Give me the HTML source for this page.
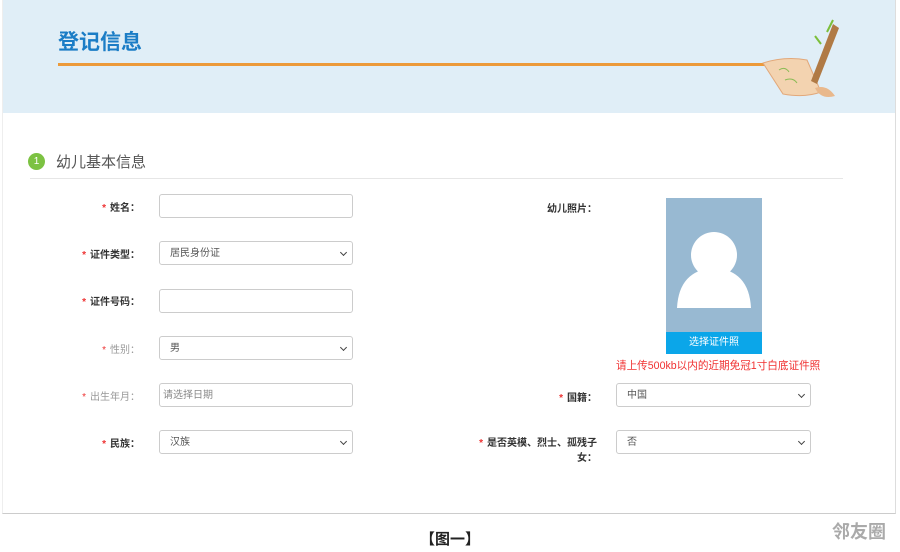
<!DOCTYPE html>
<html><head><meta charset="utf-8"><style>
body{margin:0;width:900px;height:552px;background:#fff;font-family:"Liberation Sans","Noto Sans CJK SC",sans-serif;position:relative;overflow:hidden}
.a{position:absolute}
.hdr{left:2px;top:0;width:893px;height:113px;background:#e0eef7}
.frame{left:2px;top:0;width:892px;height:513px;border-right:1px solid #ddd;border-left:1px solid #eee;border-bottom:1px solid #ccc}
.lab{font-size:10px;color:#333;font-weight:bold;text-align:right;width:200px}
.lab.g{color:#999;font-weight:normal}
.lab i{color:#e33;font-style:normal;margin-right:4px}
.in{border:1px solid #ccc;border-radius:3px;height:24px;width:194px;background:#fff;box-sizing:border-box;font-size:10px;color:#555;line-height:24px;padding-left:10px}
.in.s::after{content:"";position:absolute;right:6px;top:8px;width:4px;height:4px;border-right:1.5px solid #444;border-bottom:1.5px solid #444;transform:rotate(45deg)}
</style></head><body>
<div class="a hdr"></div>
<div class="a frame"></div>
<div class="a" style="left:58px;top:26px;font-size:21px;font-weight:bold;color:#1b7dc6">登记信息</div>
<div class="a" style="left:58px;top:63px;width:712px;height:3px;background:#ec9a3a"></div>
<svg class="a" style="left:755px;top:18px" width="90" height="85" viewBox="0 0 90 85">
<path d="M8 45 Q30 38 52 42 L66 74 Q50 80 28 76 Z" fill="#f3d3b0" stroke="#e2a87a"/>
<path d="M60 70 Q72 66 80 78 Q66 82 60 70Z" fill="#e9b88c"/>
<path d="M78 6 L84 10 L62 66 L56 63 Z" fill="#b07a45"/>
<path d="M72 14 L78 2 M66 26 L60 18" stroke="#7cbf3a" stroke-width="2"/>
<path d="M24 52 q6 -4 10 2 M30 62 q8 -3 12 3" stroke="#8bbb55" fill="none"/>
</svg>
<div class="a" style="left:28px;top:153px;width:17px;height:17px;border-radius:50%;background:#7cc242;color:#fff;font-size:10px;text-align:center;line-height:17px">1</div>
<div class="a" style="left:56px;top:151px;font-size:15px;color:#555">幼儿基本信息</div>
<div class="a" style="left:30px;top:178px;width:813px;height:1px;background:#e6e6e6"></div>

<div class="a lab" style="left:-60px;top:199px"><i>*</i>姓名：</div>
<div class="a in" style="left:159px;top:194px"></div>
<div class="a lab" style="left:-60px;top:246px"><i>*</i>证件类型：</div>
<div class="a in s" style="left:159px;top:241px">居民身份证</div>
<div class="a lab" style="left:-60px;top:293px"><i>*</i>证件号码：</div>
<div class="a in" style="left:159px;top:289px"></div>
<div class="a lab g" style="left:-60px;top:341px"><i>*</i>性别：</div>
<div class="a in s" style="left:159px;top:336px">男</div>
<div class="a lab g" style="left:-60px;top:388px"><i>*</i>出生年月：</div>
<div class="a in" style="left:159px;top:383px;padding-left:3px;color:#888">请选择日期</div>
<div class="a lab" style="left:-60px;top:435px"><i>*</i>民族：</div>
<div class="a in s" style="left:159px;top:430px">汉族</div>

<div class="a lab" style="left:397px;top:200px">幼儿照片：</div>
<div class="a" style="left:666px;top:198px;width:96px;height:156px;background:#98b9d2;overflow:hidden">
<svg width="96" height="134" viewBox="0 0 96 134"><circle cx="48" cy="57" r="23" fill="#fff"/><path d="M11 110 Q13 72 48 70 Q83 72 85 110 Z" fill="#fff"/></svg>
<div style="position:absolute;left:0;top:134px;width:96px;height:22px;background:#0ba6e9;color:#fff;font-size:10px;text-align:center;line-height:22px">选择证件照</div></div>
<div class="a" style="left:616px;top:358px;font-size:10.6px;color:#f03030">请上传500kb以内的近期免冠1寸白底证件照</div>
<div class="a lab" style="left:397px;top:389px"><i>*</i>国籍：</div>
<div class="a in s" style="left:616px;top:383px;width:195px">中国</div>
<div class="a lab" style="left:397px;top:436px;line-height:15px"><i>*</i>是否英模、烈士、孤残子<br>女：</div>
<div class="a in s" style="left:616px;top:430px;width:195px">否</div>

<div class="a" style="left:0;top:528px;width:900px;text-align:center;font-size:15px;font-weight:bold;color:#222">【图一】</div>
<div class="a" style="left:832px;top:518px;font-size:18px;color:#aaa;font-weight:bold">邻友圈</div>
</body></html>
